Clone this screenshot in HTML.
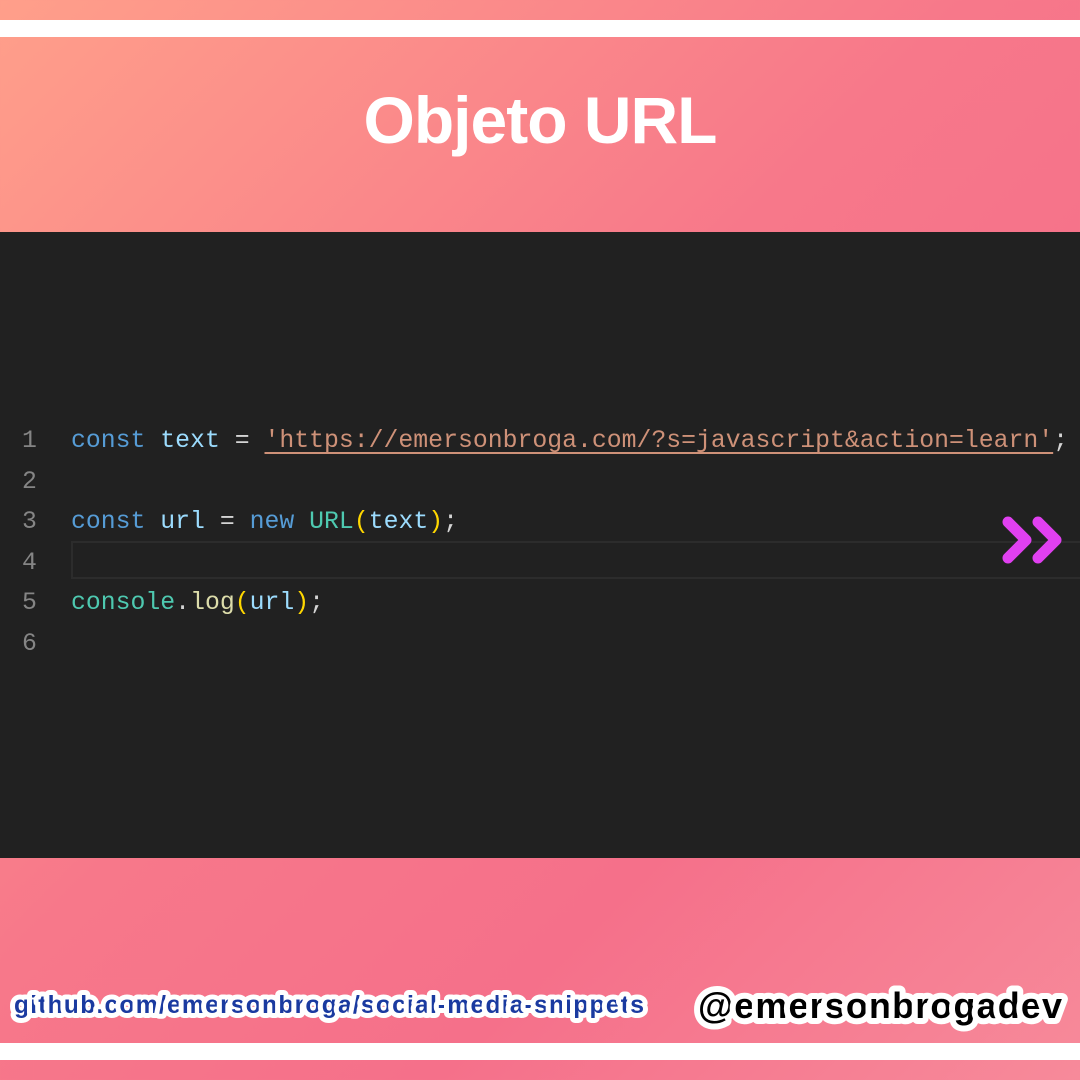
<!DOCTYPE html>
<html><head><style>
body{margin:0;width:1080px;height:1080px;overflow:hidden;position:relative;font-family:"Liberation Sans",sans-serif;
background:linear-gradient(135deg,#ff9f8a 0%,#f7788a 45%,#f5708a 70%,#f78a9a 100%);}
.stripe{position:absolute;left:0;width:1080px;background:#fff}
.title{position:absolute;top:82px;width:1080px;text-align:center;color:#fff;font-weight:bold;font-size:66px;letter-spacing:-1px}
.panel{position:absolute;left:0;top:232px;width:1080px;height:626px;background:#212121}
.code{position:absolute;left:0;top:421px;font-family:"Liberation Mono",monospace;font-size:24.8px;color:#9cdcfe}
.ln{position:absolute;left:0;height:40.6px;line-height:40.6px;white-space:pre}
.n{position:absolute;left:22px;color:#858585}
.c{position:absolute;left:71px}
.k{color:#569cd6}.v{color:#9cdcfe}.s{color:#ce9178;text-decoration:underline;text-underline-offset:5px}
.t{color:#4ec9b0}.f{color:#dcdcaa}.p{color:#ffd700}.w{color:#d4d4d4}
.hl{position:absolute;left:71px;top:541px;width:1020px;height:38px;border:2px solid #2c2c2c;box-sizing:border-box}
</style></head><body>
<div class="stripe" style="top:20px;height:17px"></div>
<div class="stripe" style="top:1043px;height:17px"></div>
<div class="title">Objeto URL</div>
<div class="panel"></div>
<div class="hl"></div>
<div class="code">
<div class="ln" style="top:0"><span class="n">1</span><span class="c"><span class="k">const</span> <span class="v">text</span> <span class="w">=</span> <span class="s">'https://emersonbroga.com/?s=javascript&amp;action=learn'</span><span class="w">;</span></span></div>
<div class="ln" style="top:40.6px"><span class="n">2</span></div>
<div class="ln" style="top:81.2px"><span class="n">3</span><span class="c"><span class="k">const</span> <span class="v">url</span> <span class="w">=</span> <span class="k">new</span> <span class="t">URL</span><span class="p">(</span><span class="v">text</span><span class="p">)</span><span class="w">;</span></span></div>
<div class="ln" style="top:121.8px"><span class="n">4</span></div>
<div class="ln" style="top:162.4px"><span class="n">5</span><span class="c"><span class="t">console</span><span class="w">.</span><span class="f">log</span><span class="p">(</span><span class="v">url</span><span class="p">)</span><span class="w">;</span></span></div>
<div class="ln" style="top:203px"><span class="n">6</span></div>
</div>
<svg style="position:absolute;left:1000px;top:513px" width="66" height="54" viewBox="0 0 66 54">
<path d="M8 9 L26 27 L8 45 M38 9 L56 27 L38 45" fill="none" stroke="#e040f0" stroke-width="11" stroke-linecap="round" stroke-linejoin="round"/>
</svg>
<svg style="position:absolute;left:0;top:975px" width="1080" height="70">
<text x="14" y="38" font-family="Liberation Sans" font-weight="bold" font-size="25" fill="#1a3aa0" stroke="#fff" stroke-width="10" stroke-linejoin="round" paint-order="stroke" textLength="630">github.com/emersonbroga/social-media-snippets</text>
<text x="698" y="43" font-family="Liberation Sans" font-weight="bold" font-size="36" fill="#000" stroke="#fff" stroke-width="12" stroke-linejoin="round" paint-order="stroke" textLength="364">@emersonbrogadev</text>
</svg>
</body></html>
